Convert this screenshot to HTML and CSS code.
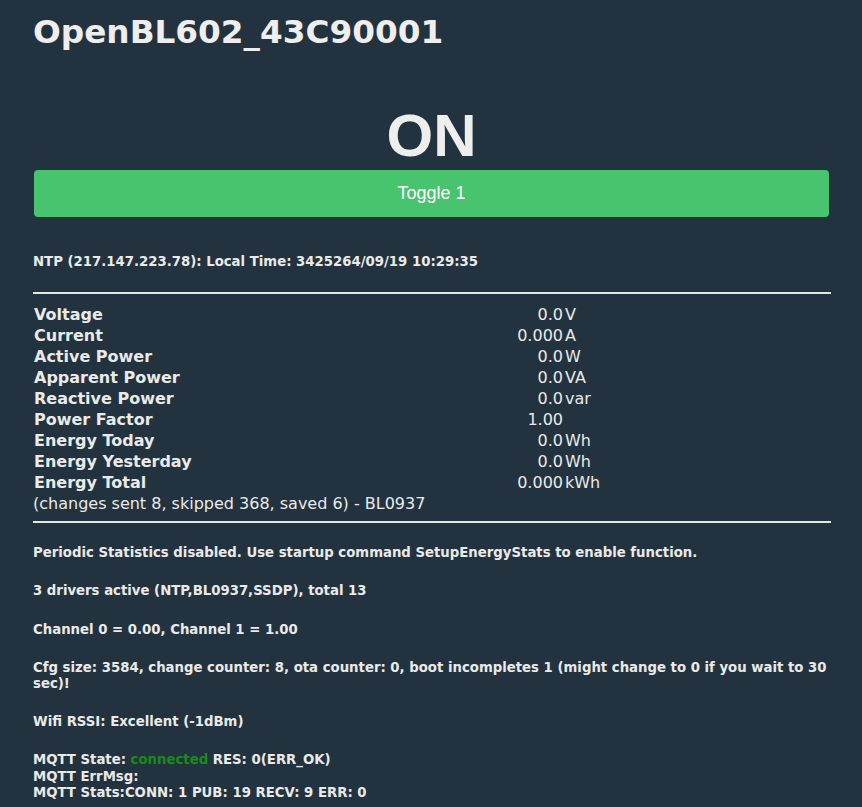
FILE: index.html
```html
<!DOCTYPE html>
<html lang="en">
<head>
  <meta charset="UTF-8">
  <meta name="viewport" content="width=device-width, initial-scale=1.0">
  <title>OpenBL602_43C90001</title>
  <link rel="stylesheet" href="styles.css">
</head>
<body>
  <div class="page">
    <h1 class="devName">OpenBL602_43C90001</h1>

    <div class="controls">
      <div class="relayState">ON</div>
      <form action="index">
        <button class="toggleBtn" type="submit">Toggle 1</button>
      </form>
    </div>

    <h5>NTP (217.147.223.78): Local Time: 3425264/09/19 10:29:35</h5>
    <hr>

    <table class="energyTable">
      <colgroup>
        <col class="colName">
        <col class="colValue">
        <col>
      </colgroup>
      <tr><td><b>Voltage</b></td><td class="val">0.0</td><td>V</td></tr>
      <tr><td><b>Current</b></td><td class="val">0.000</td><td>A</td></tr>
      <tr><td><b>Active Power</b></td><td class="val">0.0</td><td>W</td></tr>
      <tr><td><b>Apparent Power</b></td><td class="val">0.0</td><td>VA</td></tr>
      <tr><td><b>Reactive Power</b></td><td class="val">0.0</td><td>var</td></tr>
      <tr><td><b>Power Factor</b></td><td class="val">1.00</td><td></td></tr>
      <tr><td><b>Energy Today</b></td><td class="val">0.0</td><td>Wh</td></tr>
      <tr><td><b>Energy Yesterday</b></td><td class="val">0.0</td><td>Wh</td></tr>
      <tr><td><b>Energy Total</b></td><td class="val">0.000</td><td>kWh</td></tr>
    </table>
    <div class="changes">(changes sent 8, skipped 368, saved 6) - BL0937</div>
    <hr>

    <h5>Periodic Statistics disabled. Use startup command SetupEnergyStats to enable function.</h5>
    <h5>3 drivers active (NTP,BL0937,SSDP), total 13</h5>
    <h5>Channel 0 = 0.00, Channel 1 = 1.00</h5>
    <h5>Cfg size: 3584, change counter: 8, ota counter: 0, boot incompletes 1 (might change to 0 if you wait to 30 sec)!</h5>
    <h5>Wifi RSSI: Excellent (-1dBm)</h5>
    <h5>MQTT State: <span class="ok">connected</span> RES: 0(ERR_OK)<br>MQTT ErrMsg: <br>MQTT Stats:CONN: 1 PUB: 19 RECV: 9 ERR: 0</h5>
  </div>
</body>
</html>
```

FILE: styles.css
```css
body{
  margin: 0;
  background-color: #22333f;
  color: #eaeaea;
  font-family: "DejaVu Sans", Verdana, sans-serif;
}
.page{
  padding: 13px 31px 20px 33px;
}
.devName{
  font-size: 32.7px;
  margin: 0;
  color: #eeeeee;
}
.controls{
  padding: 0 2px 15px 1px;
  text-align: center;
}
.relayState{
  font-family: "Liberation Sans", Arial, sans-serif;
  font-weight: bold;
  font-size: 60px;
  margin-top: 50px;
  color: #eeeeee;
}
form{
  margin: 0;
}
.toggleBtn{
  display: block;
  width: 100%;
  height: 47px;
  border: 0;
  border-radius: 4px;
  background-color: #48c46f;
  color: #ffffff;
  font-family: "Liberation Sans", Arial, sans-serif;
  font-size: 18px;
  cursor: pointer;
}
h5{
  font-size: 13.28px;
  line-height: 16.2px;
  margin: 22px 0;
}
hr{
  margin: 8px 0;
  border: 0;
  border-top: 2px solid #e6e6e6;
}
.energyTable{
  width: 100%;
  table-layout: fixed;
  border-collapse: collapse;
  margin-top: 10px;
  font-size: 16px;
}
.colName{
  width: 431px;
}
.colValue{
  width: 100px;
}
.energyTable td{
  padding: 1px;
  line-height: 19px;
  white-space: nowrap;
}
.energyTable .val{
  text-align: right;
}
.changes{
  margin-top: 1px;
  font-size: 16px;
}
.ok{
  color: #1a8a1a;
}
```
